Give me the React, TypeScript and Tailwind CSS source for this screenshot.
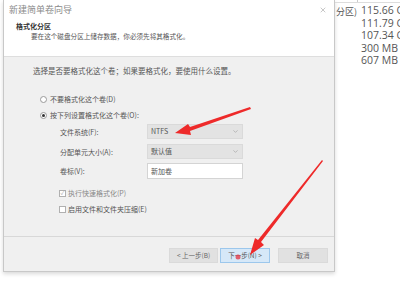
import { X, ChevronDown } from "lucide-react"

const cjk = { fontFamily: '"Noto Sans CJK SC", "Noto Sans", sans-serif' }

function Radio({ checked, label, y }: { checked?: boolean; label: string; y: string }) {
  return (
    <div className={`flex items-center gap-[3px] ml-[36px] ${y}`}>
      <span className="w-[7px] h-[7px] rounded-full border border-[#9a9a9a] bg-white flex items-center justify-center">
        {checked && <span className="w-[3px] h-[3px] rounded-full bg-[#333]" />}
      </span>
      <span className="text-[7px] leading-[10px] text-[#555]">{label}</span>
    </div>
  )
}

function Field({ label, children, y }: { label: string; children: React.ReactNode; y: string }) {
  return (
    <div className={`flex items-center pl-[56px] ${y}`}>
      <span className="w-[87px] text-[7px] leading-[10px] text-[#555] whitespace-nowrap">{label}</span>
      {children}
    </div>
  )
}

function Select({ value }: { value: string }) {
  return (
    <div className="w-[96px] h-[15px] bg-[#e3e3e3] border border-[#dadada] flex items-center justify-between px-[3px]">
      <span className="text-[7px] text-[#555]">{value}</span>
      <ChevronDown size={7} className="text-[#999]" />
    </div>
  )
}

function Check({ label, checked, y }: { label: string; checked?: boolean; y: string }) {
  return (
    <div className={`flex items-center gap-[2px] ml-[55px] ${y}`}>
      <span className="w-[7px] h-[7px] border border-[#b0b0b0] bg-white flex items-center justify-center text-[6px] leading-none text-[#aaa]">
        {checked ? "✓" : ""}
      </span>
      <span className={`text-[7px] leading-[10px] ${checked ? "text-[#888]" : "text-[#555]"}`}>{label}</span>
    </div>
  )
}

export default function App() {
  return (
    <div className="relative w-[400px] h-[300px] overflow-hidden bg-white flex" style={cjk}>
      {/* wizard dialog */}
      <div className="ml-[3px] w-[332px] shrink-0 h-[272px] flex flex-col border-x border-b border-[#c8c8c8] shadow-[0_2px_4px_rgba(0,0,0,0.15)]">
        <div className="bg-white h-[57px] border-b border-[#dedede] flex flex-col">
          <div className="h-[19px] flex items-center justify-between pl-[5px] pr-[7px]">
            <span className="text-[9px] text-[#8a8a8a]">新建简单卷向导</span>
            <X size={8} className="text-[#aaa]" />
          </div>
          <div className="pl-[12px] mt-[2px] text-[7px] leading-[10px] font-bold text-[#333]">格式化分区</div>
          <div className="pl-[27px] text-[6.6px] leading-[10px] text-[#555]">要在这个磁盘分区上储存数据，你必须先将其格式化。</div>
        </div>

        <div className="bg-[#f0f0f0] h-[180px] border-b border-[#d8d8d8] flex flex-col">
          <div className="ml-[29px] mt-[9px] text-[7.5px] leading-[10px] text-[#555]">
            选择是否要格式化这个卷；如果要格式化，要使用什么设置。
          </div>
          <Radio label="不要格式化这个卷(D)" y="mt-[18px]" />
          <Radio checked label="按下列设置格式化这个卷(O):" y="mt-[6px]" />
          <Field label="文件系统(F):" y="mt-[4px]">
            <Select value="NTFS" />
          </Field>
          <Field label="分配单元大小(A):" y="mt-[5px]">
            <Select value="默认值" />
          </Field>
          <Field label="卷标(V):" y="mt-[4px]">
            <div className="w-[96px] h-[16px] bg-white border border-[#d4d4d4] flex items-center px-[3px] text-[7px] text-[#555]">
              新加卷
            </div>
          </Field>
          <Check checked label="执行快速格式化(P)" y="mt-[9px]" />
          <Check label="启用文件和文件夹压缩(E)" y="mt-[6px]" />
        </div>

        <div className="bg-[#f0f0f0] flex-1 flex justify-end items-start pt-[11px] pr-[6px] gap-[2px]">
          <div className="w-[49px] h-[15px] bg-[#e1e1e1] border border-[#dadada] flex items-center justify-center text-[6.5px] text-[#666]">
            &lt; 上一步(B)
          </div>
          <div className="w-[50px] h-[15px] bg-[#d6e8f8] border border-[#9cc7ec] flex items-center justify-center text-[6.5px] text-[#555]">
            下一步(N) &gt;
          </div>
          <div className="ml-[6px] w-[50px] h-[15px] bg-[#e1e1e1] border border-[#dadada] flex items-center justify-center text-[6.5px] text-[#666]">
            取消
          </div>
        </div>
      </div>

      {/* disk list behind */}
      <div className="flex-1 flex flex-col">
        <div className="h-[3px] border-b border-[#ddd] flex">
          <div className="w-[23px] border-r border-[#ccc]" />
        </div>
        <div className="flex">
          <div className="w-[24px] pl-[1px] pt-[2px] text-[9px] text-[#555] whitespace-nowrap">分区)</div>
          <div className="pl-[2px] flex flex-col text-[10.5px] leading-[12.5px] text-[#555] whitespace-nowrap" style={{ fontFamily: '"Open Sans", "Liberation Sans", sans-serif' }}>
            <span className="mt-[1px]">115.66 GB</span>
            <span>111.79 GB</span>
            <span>107.34 GB</span>
            <span>300 MB</span>
            <span>607 MB</span>
          </div>
        </div>
      </div>

      {/* red annotation arrows */}
      <svg className="absolute inset-0 pointer-events-none" width="400" height="300" viewBox="0 0 400 300">
        <path d="M250 107 L190 127 L188 124 L175 133 L191 135 L190 131 L251 109 Z" fill="#ee2a2a" />
        <path d="M322 160 L258 240 L255 238 L250 255 L264 245 L261 242 L323 161 Z" fill="#ee2a2a" />
        <circle cx="238" cy="257" r="2.5" fill="#e23b4a" opacity="0.8" />
      </svg>
    </div>
  )
}
